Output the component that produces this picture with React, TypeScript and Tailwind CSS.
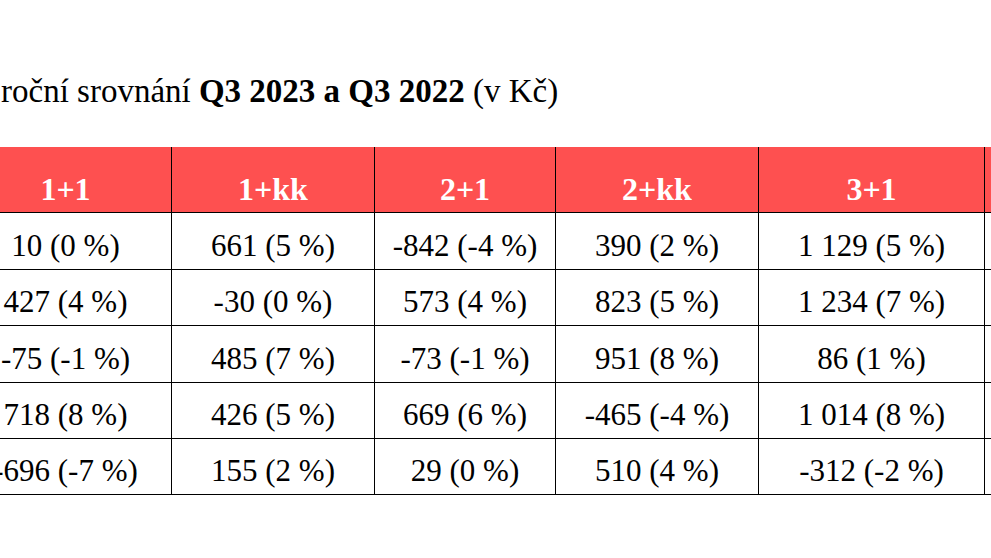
import React from "react";

const headers = ["1+1", "1+kk", "2+1", "2+kk", "3+1", ""];
const rows = [
  ["10 (0 %)", "661 (5 %)", "-842 (-4 %)", "390 (2 %)", "1 129 (5 %)", ""],
  ["427 (4 %)", "-30 (0 %)", "573 (4 %)", "823 (5 %)", "1 234 (7 %)", ""],
  ["-75 (-1 %)", "485 (7 %)", "-73 (-1 %)", "951 (8 %)", "86 (1 %)", ""],
  ["718 (8 %)", "426 (5 %)", "669 (6 %)", "-465 (-4 %)", "1 014 (8 %)", ""],
  ["-696 (-7 %)", "155 (2 %)", "29 (0 %)", "510 (4 %)", "-312 (-2 %)", ""],
];
const rowH = ["h-[57px]", "h-[56px]", "h-[57px]", "h-[56px]", "h-[56px]"];
const widths = ["w-[212px]", "w-[203px]", "w-[181px]", "w-[203px]", "w-[226px]", "w-[200px]"];

export default function App() {
  return (
    <div className="w-[991px] h-[558px] overflow-hidden bg-white text-black [font-family:'Liberation_Serif',serif]">
      <div className="pt-[72px] pl-[1px] text-[33px] leading-[38px] whitespace-nowrap">
        roční srovnání <b>Q3 2023 a Q3 2022</b> (v Kč)
      </div>
      <table className="mt-[37px] ml-[-41px] border-collapse table-fixed w-[1225px]">
        <colgroup>
          {widths.map((w, i) => (
            <col key={i} className={w} />
          ))}
        </colgroup>
        <thead>
          <tr className="h-[65px] bg-[#fe5050]">
            {headers.map((h, i) => (
              <th
                key={i}
                className="border-x border-b border-black align-bottom pb-[5px] text-white font-bold text-[32px] leading-[36px] text-center"
              >
                {h}
              </th>
            ))}
          </tr>
        </thead>
        <tbody>
          {rows.map((r, i) => (
            <tr key={i} className={rowH[i]}>
              {r.map((c, j) => (
                <td
                  key={j}
                  className="border border-black text-center align-middle text-[31px] leading-[36px] pt-[10px] pb-0 whitespace-nowrap"
                >
                  {c}
                </td>
              ))}
            </tr>
          ))}
        </tbody>
      </table>
    </div>
  );
}
